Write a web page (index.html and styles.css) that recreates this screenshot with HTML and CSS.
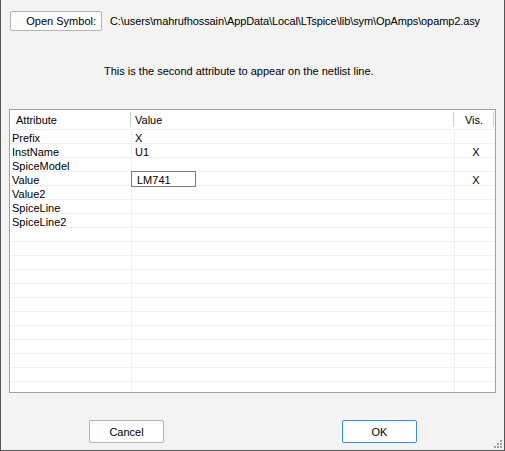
FILE: index.html
```html
<!DOCTYPE html>
<html>
<head>
<meta charset="utf-8">
<link rel="stylesheet" href="styles.css">
</head>
<body>
<div class="dialog">
  <div class="top">
    <button class="btn open">Open Symbol:</button>
    <span class="path">C:\users\mahrufhossain\AppData\Local\LTspice\lib\sym\OpAmps\opamp2.asy</span>
  </div>
  <p class="desc">This is the second attribute to appear on the netlist line.</p>
  <div class="list">
    <div class="head">
      <div class="hcell">Attribute</div>
      <div class="hcell hval">Value</div>
      <div class="hcell hvis">Vis.</div>
    </div>
    <div class="rows">
      <div class="row"><div class="c1">Prefix</div><div class="c2">X</div><div class="c3"></div></div>
      <div class="row"><div class="c1">InstName</div><div class="c2">U1</div><div class="c3">X</div></div>
      <div class="row"><div class="c1">SpiceModel</div><div class="c2"></div><div class="c3"></div></div>
      <div class="row"><div class="c1">Value</div><div class="c2 editing"><span class="editor">LM741</span></div><div class="c3">X</div></div>
      <div class="row"><div class="c1">Value2</div><div class="c2"></div><div class="c3"></div></div>
      <div class="row"><div class="c1">SpiceLine</div><div class="c2"></div><div class="c3"></div></div>
      <div class="row"><div class="c1">SpiceLine2</div><div class="c2"></div><div class="c3"></div></div>
      <div class="row"><div class="c1"></div><div class="c2"></div><div class="c3"></div></div>
      <div class="row"><div class="c1"></div><div class="c2"></div><div class="c3"></div></div>
      <div class="row"><div class="c1"></div><div class="c2"></div><div class="c3"></div></div>
      <div class="row"><div class="c1"></div><div class="c2"></div><div class="c3"></div></div>
      <div class="row"><div class="c1"></div><div class="c2"></div><div class="c3"></div></div>
      <div class="row"><div class="c1"></div><div class="c2"></div><div class="c3"></div></div>
      <div class="row"><div class="c1"></div><div class="c2"></div><div class="c3"></div></div>
      <div class="row"><div class="c1"></div><div class="c2"></div><div class="c3"></div></div>
      <div class="row"><div class="c1"></div><div class="c2"></div><div class="c3"></div></div>
      <div class="row"><div class="c1"></div><div class="c2"></div><div class="c3"></div></div>
      <div class="row"><div class="c1"></div><div class="c2"></div><div class="c3"></div></div>
      <div class="row"><div class="c1"></div><div class="c2"></div><div class="c3"></div></div>
    </div>
  </div>
  <div class="actions">
    <button class="btn act">Cancel</button>
    <button class="btn act ok">OK</button>
  </div>
  <svg class="grip" width="9" height="9" viewBox="0 0 9 9">
    <rect x="6" y="0" width="2" height="2" fill="#a0a0a0"/>
    <rect x="3" y="3" width="2" height="2" fill="#a0a0a0"/>
    <rect x="6" y="3" width="2" height="2" fill="#a0a0a0"/>
    <rect x="0" y="6" width="2" height="2" fill="#a0a0a0"/>
    <rect x="3" y="6" width="2" height="2" fill="#a0a0a0"/>
    <rect x="6" y="6" width="2" height="2" fill="#a0a0a0"/>
  </svg>
</div>
</body>
</html>
```

FILE: styles.css
```css
* { box-sizing: border-box; }
html, body { margin: 0; padding: 0; }
body {
  width: 505px;
  height: 451px;
  overflow: hidden;
  font-family: "Liberation Sans", Arial, sans-serif;
  font-size: 11px;
  color: #000;
}
.dialog {
  position: relative;
  width: 505px;
  height: 451px;
  background: #f3f3f3;
  border-left: 1px solid #555;
  border-right: 1px solid #555;
  border-bottom: 1px solid #555;
  display: flex;
  flex-direction: column;
}
.btn {
  font-family: inherit;
  font-size: 11px;
  color: #000;
  background: #fdfdfd;
  border: 1px solid #b4b4b4;
  border-radius: 2px;
  padding: 0;
  margin: 0;
}
.top {
  display: flex;
  align-items: center;
  gap: 8px;
  margin-top: 11px;
  padding-left: 9px;
  height: 20px;
}
.open {
  width: 92px;
  height: 20px;
  text-align: right;
  padding-right: 5px;
}
.path {
  white-space: nowrap;
  line-height: 13px;
  letter-spacing: -0.1px;
  padding-top: 1px;
}
.desc {
  margin: 34px 0 0 103px;
  line-height: 13px;
  height: 13px;
}
.list {
  margin: 31px 0 0 8px;
  width: 487px;
  height: 284px;
  border: 1px solid #a0a0a0;
  background: #fff;
  display: flex;
  flex-direction: column;
  overflow: hidden;
}
.head {
  display: grid;
  grid-template-columns: 121px 323px 40px;
  height: 19px;
  flex: none;
}
.hcell {
  position: relative;
  line-height: 19px;
  padding-top: 1px;
  padding-left: 6px;
  white-space: nowrap;
}
.hcell::after {
  content: "";
  position: absolute;
  right: 0;
  top: 2px;
  height: 15px;
  width: 1px;
  background: #d0d0d0;
}
.hval { padding-left: 4px; }
.hvis { text-align: center; padding-left: 0; }
.rows { flex: 1; overflow: hidden; }
.row {
  display: grid;
  grid-template-columns: 122px 323px 40px;
  height: 14px;
  border-top: 1px solid #f0f0f0;
}
.row > div {
  line-height: 13px;
  padding-top: 2px;
  white-space: nowrap;
}
.c1 { padding-left: 2px; border-right: 1px solid #f0f0f0; }
.c2 { padding-left: 3px; border-right: 1px solid #f0f0f0; }
.c3 { text-align: center; padding-left: 2px; }
.editing { position: relative; }
.editor {
  position: absolute;
  left: -1px;
  top: -1px;
  width: 65px;
  height: 16px;
  border: 1px solid #7a7a7a;
  background: #fff;
  padding-left: 5px;
  padding-top: 1px;
  line-height: 14px;
}
.actions {
  display: flex;
  gap: 178px;
  margin-top: 27px;
  padding-left: 88px;
}
.act {
  width: 75px;
  height: 23px;
}
.ok { border-color: #3a8de0; }
.grip {
  position: absolute;
  right: 1px;
  bottom: 1px;
}
```
